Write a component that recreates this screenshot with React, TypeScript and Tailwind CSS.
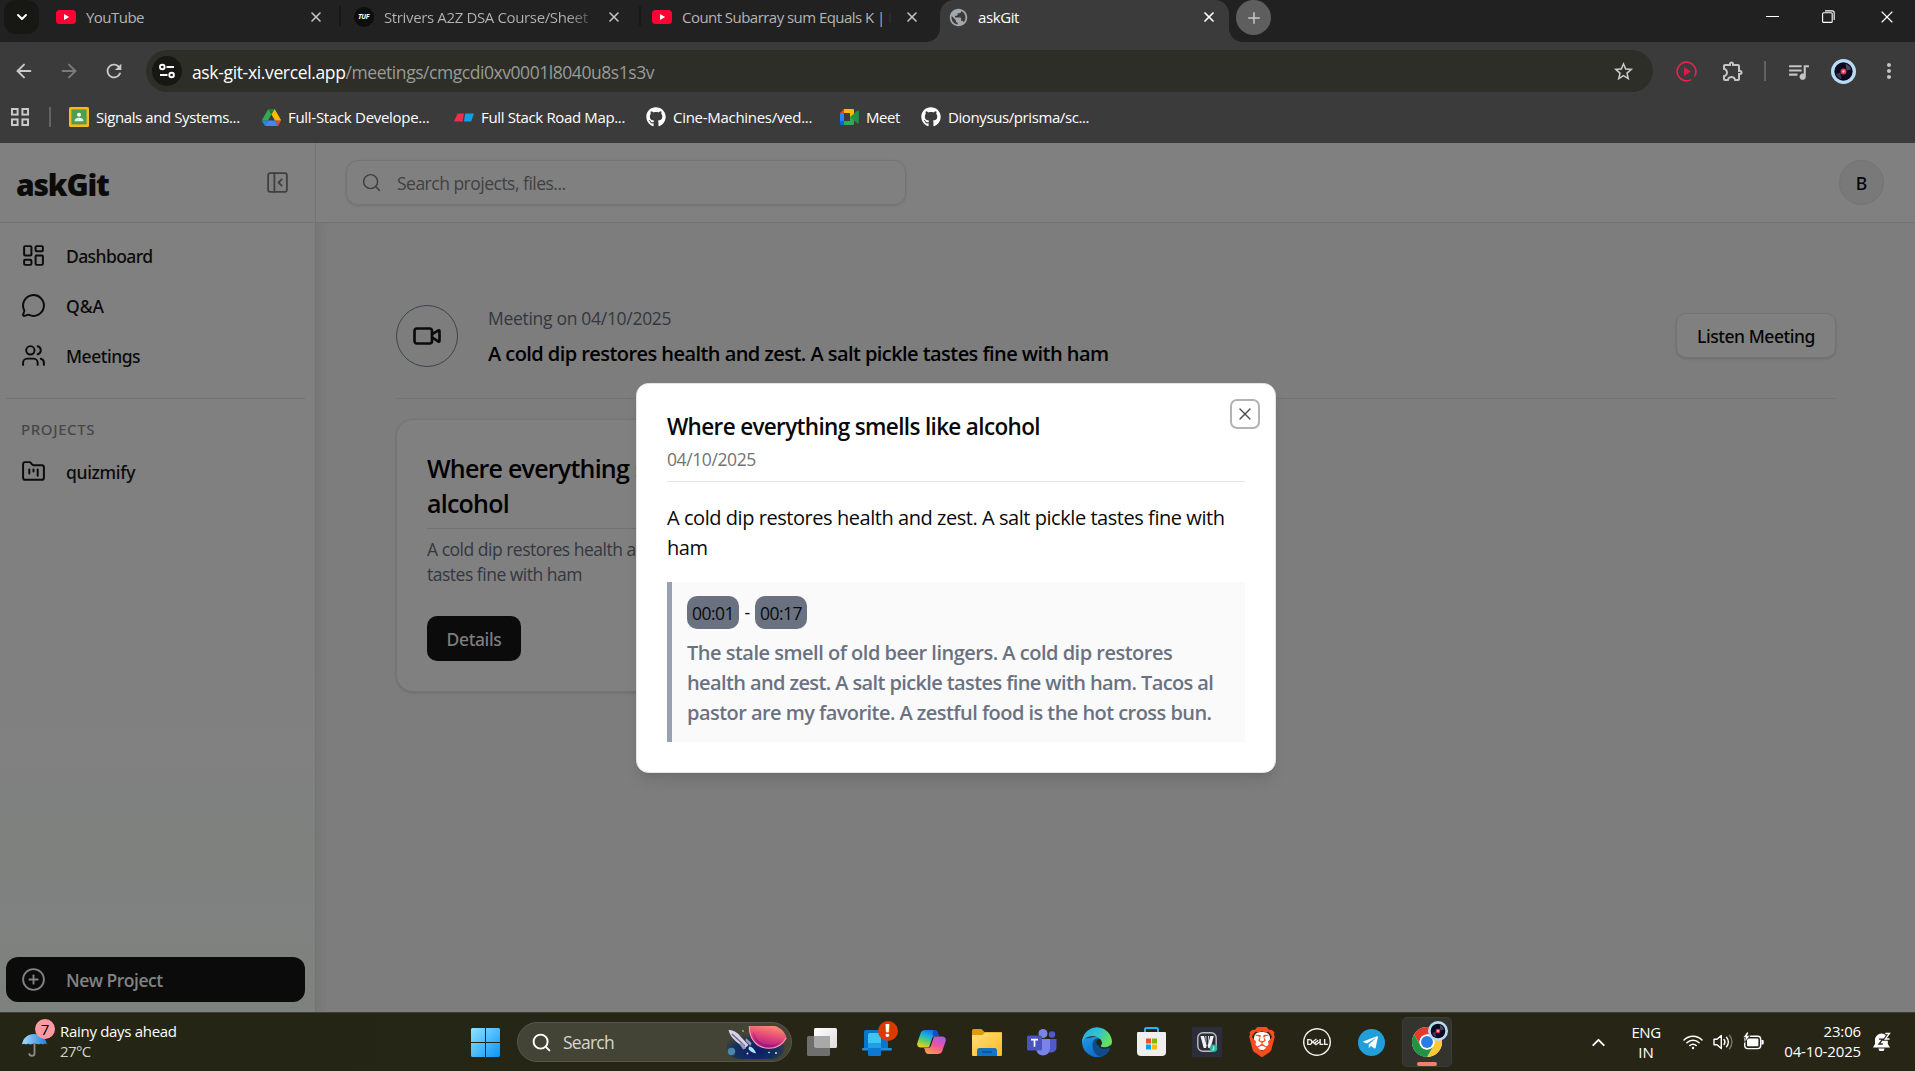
import type { ReactNode } from "react";
import {
  ArrowLeft, ArrowRight, ChevronDown, ChevronUp, CirclePlus, FolderKanban, LayoutDashboard,
  MessageCircle, PanelLeftClose, Plus, Search, Users, Video, X,
} from "lucide-react";
import { FaGithub, FaTelegramPlane } from "react-icons/fa";
import { MdMoreVert, MdOutlineExtension, MdPublic, MdQueueMusic, MdRefresh, MdStarBorder } from "react-icons/md";
import { SiBrave, SiDell } from "react-icons/si";

/* ---------- small drawings ---------- */

function YouTubeIcon() {
  return (
    <svg className="h-[14px] w-5 shrink-0" viewBox="0 0 20 14">
      <rect width="20" height="14" rx="3.5" fill="#ff0033" />
      <path d="M8 4l5.2 3L8 10z" fill="#fff" />
    </svg>
  );
}

function DiscIcon({ className }: { className: string }) {
  return (
    <svg className={className} viewBox="0 0 24 24">
      <circle cx="12" cy="12" r="12" fill="#b9dcf5" />
      <circle cx="12" cy="12" r="8.8" fill="#0b0a20" />
      <path d="M14 4.5a8 8 0 015.2 5.6L15 11z" fill="#4a4a60" />
      <path d="M10 19.5a8 8 0 01-5-5L9 13z" fill="#3b3b52" />
      <circle cx="12" cy="12" r="2.8" fill="#e8365f" />
      <circle cx="12" cy="12" r="1.1" fill="#ffd9a0" />
    </svg>
  );
}

function TuneIcon() {
  return (
    <svg className="size-[18px]" viewBox="0 0 18 18" fill="none" stroke="#fff" strokeWidth="1.9">
      <circle cx="4.3" cy="5" r="2.3" />
      <path d="M8.5 5H16M2 13h7.5" />
      <circle cx="13.6" cy="13" r="2.3" />
    </svg>
  );
}

function ClassroomIcon() {
  return (
    <svg className="size-5" viewBox="0 0 20 20">
      <rect width="20" height="20" rx="1.5" fill="#f6bb16" />
      <rect x="2.4" y="2.4" width="15.2" height="15" fill="#4a9f52" />
      <circle cx="10" cy="7.7" r="2" fill="#fff" />
      <path d="M5.5 14.2c0-2.4 2.2-3.4 4.5-3.4s4.5 1 4.5 3.4z" fill="#e8f5ec" />
    </svg>
  );
}

function DriveIcon() {
  return (
    <svg className="h-[17px] w-[19px]" viewBox="0 0 87.3 78">
      <path d="M6.6 66.85l3.85 6.65c.8 1.4 1.95 2.5 3.3 3.3L27.5 53H0c0 1.55.4 3.1 1.2 4.5z" fill="#1e88e5" />
      <path d="M43.65 25L29.9 1.2c-1.35.8-2.5 1.9-3.3 3.3L1.2 48.5C.4 49.9 0 51.45 0 53h27.5z" fill="#34a853" />
      <path d="M73.55 76.8c1.35-.8 2.5-1.9 3.3-3.3l8.5-16c.8-1.4 1.2-2.95 1.2-4.5H59.8l5.85 11.5z" fill="#ea4335" />
      <path d="M43.65 25L57.4 1.2C56.05.4 54.5 0 52.9 0H34.4c-1.6 0-3.15.45-4.5 1.2z" fill="#188038" />
      <path d="M59.8 53H27.5L13.75 76.8c1.35.8 2.9 1.2 4.5 1.2h50.8c1.6 0 3.15-.45 4.5-1.2z" fill="#4285f4" />
      <path d="M73.4 26.5L60.7 4.5c-.8-1.4-1.95-2.5-3.3-3.3L43.65 25 59.8 53h27.45c0-1.55-.4-3.1-1.2-4.5z" fill="#fbbc04" />
    </svg>
  );
}

function RoadmapIcon() {
  return (
    <svg className="h-[9px] w-5" viewBox="0 0 20 8">
      <path d="M3.5 0H10L8.6 8H0z" fill="#ee2e4a" />
      <path d="M11.2 0H20l-2.8 8H10z" fill="#12a0e0" />
    </svg>
  );
}

function MeetIcon() {
  return (
    <svg className="h-4 w-[19px]" viewBox="0 0 19 16">
      <path d="M4 0v4H0z" fill="#ea4335" />
      <path d="M0 4h4v8H0z" fill="#2684fc" />
      <path d="M0 12h4v4H1.2A1.2 1.2 0 010 14.8z" fill="#0066da" />
      <path d="M4 0h8.8A1.2 1.2 0 0114 1.2V8l-4 0V4H4z" fill="#ffba00" />
      <path d="M4 12h6V8h4v6.8a1.2 1.2 0 01-1.2 1.2H4z" fill="#34a853" />
      <path d="M10 8l7.6-6.4c.5-.4 1.2-.1 1.2.6v11.6c0 .6-.7 1-1.2.6z" fill="#229148" />
    </svg>
  );
}

function AppsIcon() {
  return (
    <svg className="size-[18px]" viewBox="0 0 18 18" fill="none" stroke="#c9c9c9" strokeWidth="2">
      <rect x="1" y="1" width="5.6" height="5.6" />
      <rect x="11.4" y="1" width="5.6" height="5.6" />
      <rect x="1" y="11.4" width="5.6" height="5.6" />
      <rect x="11.4" y="11.4" width="5.6" height="5.6" />
    </svg>
  );
}

function RestoreIcon() {
  return (
    <svg className="size-[13px]" viewBox="0 0 13 13" fill="none" stroke="#fff" strokeWidth="1.1">
      <rect x="0.6" y="2.8" width="9.6" height="9.6" rx="1" />
      <path d="M3 .9h7.2a2 2 0 012 2V10" />
    </svg>
  );
}

function RecordIcon() {
  return (
    <svg className="size-[21px]" viewBox="0 0 21 21">
      <circle
        cx="10.5" cy="10.5" r="9.400" fill="none" stroke="#e8234f" strokeWidth="1.600"
        strokeDasharray="54 5" transform="rotate(60 10.5 10.5)"
      />
      <path d="M8 6l7 4.500L8 15z" fill="#d81b47" />
    </svg>
  );
}

function UmbrellaIcon() {
  return (
    <svg className="h-6 w-[25px]" viewBox="0 0 25 24">
      <defs>
        <linearGradient id="umb" x1="0" x2="1">
          <stop offset="0" stopColor="#a8dcfb" />
          <stop offset="1" stopColor="#1e7fe0" />
        </linearGradient>
      </defs>
      <path d="M12.5 11v9.2a2.6 2.6 0 01-5.2 0" fill="none" stroke="#8d8d8d" strokeWidth="1.8" />
      <path d="M0 11.5C1 5 6 1 12.3 1S24 5 25 11.5c-1.3-.9-2.800-.9-4 0-1.4-.9-3-.9-4.300 0-1.400-.9-7-.9-8.400 0-1.300-.9-3-.9-4.300 0-1.200-.9-2.700-.9-4 0z" fill="url(#umb)" />
    </svg>
  );
}

function WindowsIcon() {
  return (
    <svg className="size-[29px]" viewBox="0 0 29 29">
      <defs>
        <linearGradient id="win" x1="0" y1="0" x2="1" y2="1" gradientUnits="objectBoundingBox">
          <stop offset="0" stopColor="#8fe3ff" />
          <stop offset="1" stopColor="#0a94f5" />
        </linearGradient>
      </defs>
      <path d="M1 0h13v14H0V1zM15 0h13l1 1v13H15zM0 15h14v14H1l-1-1zM15 15h14v13l-1 1H15z" fill="url(#win)" />
    </svg>
  );
}

function RocketPicture() {
  return (
    <svg className="h-[34px] w-[60px]" viewBox="0 0 60 34">
      <defs>
        <radialGradient id="sky" cx="0.5" cy="0.7" r="0.6">
          <stop offset="0" stopColor="#0e1a6a" />
          <stop offset="0.6" stopColor="#12305f" />
          <stop offset="1" stopColor="#12305f" stopOpacity="0" />
        </radialGradient>
        <linearGradient id="planet" x1="0.7" y1="0" x2="0.35" y2="1">
          <stop offset="0" stopColor="#ff8f6b" />
          <stop offset="0.5" stopColor="#e0457a" />
          <stop offset="1" stopColor="#a3128a" />
        </linearGradient>
      </defs>
      <rect x="0" y="6" width="57" height="28" rx="12" fill="url(#sky)" />
      <path d="M22 1h26c6 2 10 6 11.500 12-3 6-9 10.500-17 10.500C30 23.500 21.500 14 22 1z" fill="url(#planet)" />
      <path d="M26 6c2 8 8 14 16 14 5 0 9-1 12-4-3 4.500-7 6-12 6-9 0-16-7-16-16z" fill="#8e0f78" opacity="0.550" />
      <path d="M22.300 1c-.4 13 8 22.300 19.500 22.300 8 0 14-4 17.400-10.300" fill="none" stroke="#ff9bb0" strokeWidth="1.100" />
      <path d="M1.500 5c5 0 9 2.500 12 6.500l8 8.500-4 3.500-9-7.500C5 13 2.500 9 1.500 5z" fill="#d9d3e6" />
      <path d="M5 9l13 12" stroke="#6d6688" strokeWidth="1.400" />
      <path d="M12 18l4 6.500 3-1-3-5zM19 13l5.500 5-1 3-5-5z" fill="#9d94b8" />
      <path d="M22 21.500c4 .5 6 3.500 7 7-4-1-6-2.500-7.500-4.500z" fill="#a9e4ff" />
      <circle cx="4.500" cy="26.500" r="3.700" fill="#4c86a8" />
      <circle cx="16" cy="6" r="0.800" fill="#ffd9b0" />
      <circle cx="20.500" cy="28.500" r="0.900" fill="#ffd9b0" />
      <circle cx="42" cy="27.500" r="0.800" fill="#fff" />
      <circle cx="49" cy="28" r="1" fill="#ffd9b0" />
    </svg>
  );
}

function TaskViewIcon() {
  return (
    <svg className="h-7 w-[30px]" viewBox="0 0 30 28">
      <defs>
        <linearGradient id="tv" x1="0" y1="0" x2="1" y2="1">
          <stop offset="0" stopColor="#fff" />
          <stop offset="1" stopColor="#dcdcdc" />
        </linearGradient>
      </defs>
      <rect x="7" y="0" width="23" height="20" rx="1.5" fill="url(#tv)" />
      <rect x="0" y="8" width="23" height="20" rx="1.5" fill="#6f6f6f" />
      <path d="M7 8h16v12H8.500L7 18.500z" fill="#a9a9a9" />
    </svg>
  );
}

function PhoneLinkIcon() {
  return (
    <svg className="h-[27px] w-[30px]" viewBox="0 0 30 27">
      <rect x="2" y="1" width="24" height="20" rx="1.5" fill="#0a74c9" />
      <rect x="0" y="19" width="30" height="2.600" rx="1" fill="#1690e0" />
      <rect x="6" y="4" width="13" height="23" rx="1.500" fill="#0f78d0" />
      <path d="M6 5.500A1.500 1.500 0 017.500 4h10A1.500 1.500 0 0119 5.500V18H6z" fill="#3cc6f4" />
      <path d="M6 14h13v5H6z" fill="#1e9fe4" />
    </svg>
  );
}

function CopilotIcon() {
  return (
    <svg className="h-[26px] w-[29px]" viewBox="0 0 29 26">
      <defs>
        <linearGradient id="cpA" x1="0.6" y1="0" x2="0.2" y2="1">
          <stop offset="0" stopColor="#1b6fe8" />
          <stop offset="0.35" stopColor="#18b5d8" />
          <stop offset="0.7" stopColor="#7fd04a" />
          <stop offset="1" stopColor="#ffcf1a" />
        </linearGradient>
        <linearGradient id="cpB" x1="0.8" y1="0" x2="0.3" y2="1">
          <stop offset="0" stopColor="#a05cf0" />
          <stop offset="0.5" stopColor="#f0539c" />
          <stop offset="1" stopColor="#ff9a4a" />
        </linearGradient>
      </defs>
      <path d="M8.500 1h9.200c1.600 0 2.600 1 3 2.400L21.800 7h-3.700c-1.600 0-2.500.9-3 2.300L12 18.500H4C.8 18.500-.4 16.500.3 14L3.600 4.300C4.400 2 6 1 8.500 1z" fill="url(#cpA)" />
      <path d="M16.500 1h1.200c1.600 0 2.600 1 3 2.400L21.800 7h-4.300c-1 0-1.800-.8-2-1.800z" fill="#1849c6" />
      <path d="M20.500 25h-9.200c-1.600 0-2.600-1-3-2.400L7.200 19h3.700c1.600 0 2.500-.9 3-2.300L17 7.500h8c3.200 0 4.400 2 3.700 4.500l-3.300 9.700c-.8 2.300-2.400 3.300-4.900 3.300z" fill="url(#cpB)" />
    </svg>
  );
}

function ExplorerIcon() {
  return (
    <svg className="h-[27px] w-[30px]" viewBox="0 0 30 27">
      <defs>
        <linearGradient id="fold" x1="0" y1="0" x2="1" y2="1">
          <stop offset="0" stopColor="#ffe07a" />
          <stop offset="1" stopColor="#fbb924" />
        </linearGradient>
      </defs>
      <path d="M0 1.500A1.500 1.500 0 011.500 0h8l3 3H29a1 1 0 011 1v8H0z" fill="#dd9a0b" />
      <path d="M0 6h10.500l2.500-2.500h17V26a1 1 0 01-1 1H1a1 1 0 01-1-1z" fill="url(#fold)" />
      <path d="M5 27v-5.500A2.500 2.500 0 017.500 19h15a2.500 2.500 0 012.500 2.500V27z" fill="#1173c4" />
      <path d="M10 23h10" stroke="#0a4f91" strokeWidth="1.500" />
    </svg>
  );
}

function TeamsIcon() {
  return (
    <svg className="h-[27px] w-[30px]" viewBox="0 0 30 27">
      <circle cx="25" cy="5.500" r="3.200" fill="#5059c9" />
      <circle cx="16" cy="4.500" r="4.500" fill="#7b83eb" />
      <path d="M20 10h9.500v8.500a5 5 0 01-5 5H20z" fill="#5059c9" />
      <path d="M9 10h14v9.500a7 7 0 01-14 0z" fill="#7b83eb" />
      <rect x="0" y="6.500" width="15" height="15" rx="1.500" fill="#4b53bc" />
      <path d="M4 10.700h7M7.500 10.700v7" stroke="#fff" strokeWidth="1.700" />
    </svg>
  );
}

function EdgeIcon() {
  return (
    <svg className="size-[30px]" viewBox="0 0 30 30">
      <defs>
        <linearGradient id="edA" x1="0" y1="0" x2="1" y2="0.4">
          <stop offset="0" stopColor="#2aa7e8" />
          <stop offset="0.55" stopColor="#2fc3d2" />
          <stop offset="1" stopColor="#66df5c" />
        </linearGradient>
        <linearGradient id="edB" x1="0" y1="0" x2="0.6" y2="1">
          <stop offset="0" stopColor="#1f9de8" />
          <stop offset="1" stopColor="#0f67c4" />
        </linearGradient>
      </defs>
      <path d="M.4 12A15 15 0 000 15a15 15 0 0027.600 8.300L20 18 17 9z" fill="url(#edB)" />
      <path d="M.4 12A15 15 0 0130 14.500c0 4-3 6.500-7 6.500-3 0-5-1-5-2.300 0-.9 1.300-1.400 1.300-3.400 0-3.500-3.500-6-8-6C6.500 9.300 2 11 .4 15z" fill="url(#edA)" />
      <path d="M10.500 18c0-5 3-7 6-6.700 1.800.7 2.800 2.200 2.800 4 0 2-1.300 2.500-1.300 3.400 0 1.300 2 2.300 5 2.300 1.800 0 3.400-.4 4.600-1.200.5.8.4 2-.3 3.500a15 15 0 01-9 6.200C13.500 28.500 10.500 23.500 10.500 18z" fill="#114a8b" />
      <path d="M19.300 15.300c0 2-1.300 2.500-1.300 3.400 0 1.300 2 2.300 5 2.300 2.500 0 4.500-.8 5.700-2.200" fill="none" stroke="#252516" strokeWidth="1.600" />
      <ellipse cx="17" cy="15.500" rx="2.600" ry="3.200" fill="#252516" />
    </svg>
  );
}

function StoreIcon() {
  return (
    <svg className="h-[30px] w-[29px]" viewBox="0 0 29 30">
      <path d="M8 6V2.500A1.500 1.500 0 019.500 1h10A1.500 1.500 0 0121 2.500V6" fill="none" stroke="#2bb3f0" strokeWidth="2" />
      <path d="M0 6a1 1 0 011-1h27a1 1 0 011 1v19a4 4 0 01-4 4H4a4 4 0 01-4-4z" fill="#efefef" />
      <path d="M9 11.500h5v5H9z" fill="#f25022" />
      <path d="M15 11.500h5v5h-5z" fill="#7fba00" />
      <path d="M9 17.500h5v5H9z" fill="#00a4ef" />
      <path d="M15 17.500h5v5h-5z" fill="#ffb900" />
    </svg>
  );
}

function SavedAppIcon() {
  return (
    <svg className="size-[30px]" viewBox="0 0 30 30">
      <rect width="30" height="30" fill="#2b2d3b" />
      <rect x="5.800" y="5.800" width="18.400" height="18.400" rx="5" fill="none" stroke="#bdbdbd" strokeWidth="1.400" />
      <path d="M8.500 9h3.500l2.600 9.500-.6 2.500h-2.300z" fill="#f2f2f2" />
      <path d="M13.300 9h1v8.500zM17 9h-1v8.500z" fill="#f2f2f2" />
      <path d="M21.800 9h-3.500l-2.600 9.500.6 2.500h2.300z" fill="#f2f2f2" />
      <circle cx="21.500" cy="21.300" r="3.800" fill="#25b8a0" />
      <path d="M21.800 19.300v3.200M20.200 22.800h1.600" stroke="#fff" strokeWidth="0.900" />
    </svg>
  );
}

function ChromeIcon() {
  return (
    <svg className="size-[30px]" viewBox="0 0 48 48">
      <circle cx="24" cy="24" r="24" fill="#fff" />
      <path d="M3.200 12A24 24 0 0144.800 12H24a12 12 0 00-10.400 18z" fill="#e33b2e" />
      <path d="M44.800 12A24 24 0 0124 48l10.400-18A12 12 0 0024 12z" fill="#fcc934" />
      <path d="M24 48A24 24 0 013.200 12l10.400 18a12 12 0 0020.800 0z" fill="#229342" />
      <circle cx="24" cy="24" r="12" fill="#fff" />
      <circle cx="24" cy="24" r="9.500" fill="#2a7de9" />
    </svg>
  );
}

function WifiIcon() {
  return (
    <svg className="h-4 w-5" viewBox="0 0 20 16" fill="none" stroke="#fff" strokeWidth="1.500" strokeLinecap="round">
      <path d="M1 6a12.500 12.500 0 0118 0M3.900 8.800a8.500 8.500 0 0112.200 0M6.800 11.500a4.500 4.500 0 016.400 0" />
      <circle cx="10" cy="14" r="1.200" fill="#fff" stroke="none" />
    </svg>
  );
}

function SpeakerIcon() {
  return (
    <svg className="h-[18px] w-[21px]" viewBox="0 0 21 18" fill="none" stroke="#fff" strokeWidth="1.400" strokeLinecap="round" strokeLinejoin="round">
      <path d="M1 6.300h3L8.300 2.500v13L4 11.700H1z" />
      <path d="M11 6.500a4 4 0 010 5M13.500 4.200a7.200 7.200 0 010 9.600" />
      <path d="M16.500 2.300a10.500 10.500 0 010 13.400" stroke="#77776c" />
    </svg>
  );
}

function BatteryIcon() {
  return (
    <svg className="h-[18px] w-[21px]" viewBox="0 0 21 18">
      <rect x="1.700" y="4.200" width="16" height="12.400" rx="3" fill="none" stroke="#fff" strokeWidth="1.400" />
      <rect x="4" y="6.500" width="11.400" height="7.800" rx="1" fill="#fff" />
      <path d="M18.500 8h1c.8 0 1.200.4 1.200 1v2.600c0 .6-.4 1-1.200 1h-1z" fill="#fff" />
      <path d="M3.800 0L0 5.600h2.400L1.500 10.500 7.200 3.800H4.600L5.800 0z" fill="#fff" stroke="#252516" strokeWidth="0.800" />
    </svg>
  );
}

function BellIcon() {
  return (
    <svg className="h-[19px] w-[18px]" viewBox="0 0 18 19">
      <path d="M8.500 1.500A6.500 6.500 0 002 8v4L0 15.400h17L14.800 12V8a6.300 6.300 0 00-6.300-6.500z" fill="#fff" />
      <path d="M5.500 16.400h6a3 3 0 01-6 0z" fill="#fff" />
      <path d="M6 7.200h3.600L6 12h3.800" fill="none" stroke="#252516" strokeWidth="1.300" />
      <path d="M12.300 1.500h4.200L12.300 7h4.200" fill="none" stroke="#252516" strokeWidth="3.400" />
      <path d="M12.300 1.500h4.200L12.300 7h4.200" fill="none" stroke="#fff" strokeWidth="1.300" />
    </svg>
  );
}

/* ---------- browser chrome ---------- */

function Tab({ icon, title, width }: { icon: ReactNode; title: ReactNode; width: string }) {
  return (
    <div className={`flex h-[34px] shrink-0 items-center ${width}`}>
      <div className="flex w-5 shrink-0 justify-center">{icon}</div>
      <div className="ml-[10px] h-5 w-[204px] whitespace-nowrap text-[15px] leading-5 text-[#b4b4b4]">
        {title}
      </div>
      <X className="ml-[18px] size-[16px] shrink-0 text-[#c4c4c4]" strokeWidth={2.4} />
    </div>
  );
}

function TabSeparator() {
  return <div className="mt-1.5 h-5 w-[2px] shrink-0 bg-[#181914]" />;
}

function TabStrip() {
  return (
    <div className="flex h-[42px] bg-[#212121]">
      <div className="ml-1 flex h-[34px] w-[35px] items-center justify-center rounded-xl bg-[#171813]">
        <ChevronDown className="size-4 text-white" strokeWidth={3} />
      </div>
      <Tab
        width="ml-[17px] w-[283px]"
        icon={<YouTubeIcon />}
        title={<span className="tracking-[-0.035em]">YouTube</span>}
      />
      <TabSeparator />
      <Tab
        width="ml-[13px] w-[285px]"
        icon={
          <span className="flex size-5 shrink-0 items-center justify-center rounded-full bg-[#0d0d0d] pr-px text-[7px] font-bold italic tracking-tighter text-white">
            TUF
          </span>
        }
        title={
          <span className="bg-gradient-to-r from-[#b4b4b4] from-90% to-[#555] bg-clip-text tracking-[-0.024em] text-transparent">
            Strivers A2Z DSA Course/Sheet
          </span>
        }
      />
      <TabSeparator />
      <Tab
        width="ml-[11px] w-[273px]"
        icon={<YouTubeIcon />}
        title={<span className="tracking-[-0.036em]">Count Subarray sum Equals K | <span className="text-[#303030]">I</span></span>}
      />
      <div className="-ml-px h-[42px] w-4 bg-[#3b3b3b]">
        <div className="h-full w-full rounded-br-[14px] bg-[#212121]" />
      </div>
      <div className="flex h-[42px] w-[289px] shrink-0 items-start rounded-t-[14px] bg-[#3b3b3b]">
        <div className="flex h-[34px] w-full items-center pl-2 pr-[12px]">
          <MdPublic className="size-[21px] text-[#a3a8ad]" />
          <span className="ml-[9px] text-[15px] leading-5 tracking-[-0.027em] text-white">askGit</span>
          <X className="ml-auto size-4 text-white" strokeWidth={2.6} />
        </div>
      </div>
      <div className="h-[42px] w-[15px] bg-[#3b3b3b]">
        <div className="h-full w-full rounded-bl-[14px] bg-[#212121]" />
      </div>
      <div className="-ml-[8px] flex size-[35px] items-center justify-center rounded-full bg-[#5e5e5e]">
        <Plus className="size-[18px] text-[#c8c8c8]" strokeWidth={2} />
      </div>
      <div className="ml-auto flex h-[33px] items-center pr-[18px]">
        <div className="h-px w-[13px] bg-white" />
        <div className="ml-[43px]"><RestoreIcon /></div>
        <X className="ml-[42px] size-[20px] text-white" strokeWidth={1.4} />
      </div>
    </div>
  );
}

function AddressBar() {
  return (
    <div className="flex h-[58px] items-center">
      <div className="flex w-[146px] items-center gap-[23px] pl-[13px]">
        <ArrowLeft className="size-[22px] text-[#c9c9c9]" strokeWidth={2.1} />
        <ArrowRight className="size-[22px] text-[#7b7b7b]" strokeWidth={2.1} />
        <MdRefresh className="size-[22px] text-[#c9c9c9]" />
      </div>
      <div className="flex h-[42px] w-[1507px] items-center rounded-full bg-[#2d2e28] pl-[6px] pr-[18px]">
        <div className="flex size-[30px] items-center justify-center rounded-full bg-[#171813]">
          <TuneIcon />
        </div>
        <div className="ml-[10px] whitespace-nowrap pt-px text-[17.5px] leading-6 tracking-[-0.0255em] text-[#9a9b97]">
          <span className="tracking-[-0.02em] text-white">ask-git-xi.vercel.app</span>
          /meetings/cmgcdi0xv0001l8040u8s1s3v
        </div>
        <MdStarBorder className="ml-auto size-[23px] text-[#c9c9c9]" />
      </div>
      <div className="flex flex-1 items-center pl-[23px]">
        <RecordIcon />
        <MdOutlineExtension className="ml-[24px] size-[24px] text-[#c4c4c4]" />
        <div className="ml-[19px] h-5 w-[2px] bg-[#626262]" />
        <MdQueueMusic className="ml-[20px] size-[25px] text-[#c4c4c4]" />
        <DiscIcon className="ml-5 size-[25px]" />
        <MdMoreVert className="ml-[21px] size-[24px] text-[#c4c4c4]" />
      </div>
    </div>
  );
}

function Bookmark({ icon, label, className }: { icon: ReactNode; label: string; className: string }) {
  return (
    <div className={`flex items-center ${className}`}>
      <div className="flex w-5 justify-center">{icon}</div>
      <span className="ml-[7px] whitespace-nowrap text-[15px] leading-5 text-white">{label}</span>
    </div>
  );
}

function BookmarksBar() {
  return (
    <div className="flex h-[34px] items-center pl-[11px]">
      <AppsIcon />
      <div className="ml-[20px] h-5 w-[2px] bg-[#626262]" />
      <Bookmark className="ml-[18px] w-[192px] tracking-[-0.0255em]" icon={<ClassroomIcon />} label="Signals and Systems..." />
      <Bookmark className="w-[193px] tracking-[-0.018em]" icon={<DriveIcon />} label="Full-Stack Develope..." />
      <Bookmark className="w-[192px] tracking-[-0.022em]" icon={<RoadmapIcon />} label="Full Stack Road Map..." />
      <Bookmark className="w-[193px] tracking-[-0.018em]" icon={<FaGithub className="size-5 text-white" />} label="Cine-Machines/ved..." />
      <Bookmark className="w-[82px] tracking-[-0.028em]" icon={<MeetIcon />} label="Meet" />
      <Bookmark className="tracking-[-0.025em]" icon={<FaGithub className="size-5 text-white" />} label="Dionysus/prisma/sc..." />
    </div>
  );
}

/* ---------- askGit page ---------- */

function NavItem({ icon, label, className = "" }: { icon: ReactNode; label: string; className?: string }) {
  return (
    <div className={`flex h-[50px] items-center pl-[21px] text-[#0b0b0b] ${className}`}>
      {icon}
      <span className="ml-5 pt-[2px] font-['Noto_Sans'] text-[17.5px] font-medium leading-6">{label}</span>
    </div>
  );
}

function Sidebar() {
  return (
    <aside className="flex w-[316px] shrink-0 flex-col border-r border-[#737373] bg-gradient-to-b from-[#808080] from-60% to-[#7e827f]">
      <div className="flex h-20 items-center justify-between border-b border-[#737373] pl-4 pr-[25px]">
        <span className="pt-[3px] text-[30px] font-extrabold tracking-[-0.04em] text-[#0b0b0b]">askGit</span>
        <PanelLeftClose className="size-[25px] text-[#3f3f3f]" strokeWidth={1.7} />
      </div>
      <nav className="pt-[7px]">
        <NavItem className="tracking-[-0.037em]" icon={<LayoutDashboard className="size-[25px]" strokeWidth={1.9} />} label="Dashboard" />
        <NavItem icon={<MessageCircle className="size-[25px]" strokeWidth={1.9} />} label="Q&A" />
        <NavItem className="tracking-[-0.03em]" icon={<Users className="size-[25px]" strokeWidth={1.9} />} label="Meetings" />
      </nav>
      <div className="ml-1.5 mr-[10px] mt-[18px] h-px bg-[#737373]" />
      <div className="mt-5 pl-[21px] font-['Noto_Sans'] text-[15px] font-medium leading-5 tracking-[0.04em] text-[#474747]">
        PROJECTS
      </div>
      <NavItem className="mt-[7px] tracking-[-0.02em]" icon={<FolderKanban className="size-[25px]" strokeWidth={1.9} />} label="quizmify" />
      <button className="mb-[10px] ml-1.5 mr-[10px] mt-auto flex h-[45px] items-center rounded-xl bg-[#0b0b0b] pl-[15px] text-[#828282]">
        <CirclePlus className="size-[25px]" strokeWidth={1.8} />
        <span className="ml-5 pt-[2px] text-[17.5px] font-semibold tracking-[-0.029em]">New Project</span>
      </button>
    </aside>
  );
}

function TopBar() {
  return (
    <header className="flex h-20 items-center justify-between border-b border-[#737373] bg-[#808080] pl-[30px] pr-[31px]">
      <div className="flex h-[45px] w-[560px] items-center rounded-xl border border-[#747474] pl-[14px] shadow-sm">
        <Search className="size-[21px] text-[#404040]" strokeWidth={1.7} />
        <span className="ml-[15px] pt-[2px] text-[17.5px] tracking-[-0.029em] text-[#404040]">Search projects, files...</span>
      </div>
      <div className="flex size-[45px] items-center justify-center rounded-full border border-[#747474] bg-[#797979] pt-[2px] font-['Noto_Sans'] text-[17.5px] font-medium text-[#050505]">
        B
      </div>
    </header>
  );
}

function MeetingHeader() {
  return (
    <div className="flex h-[94px] items-start border-b border-[#737373]">
      <div className="flex size-[62px] items-center justify-center rounded-full border border-[#3d424c]">
        <Video className="size-[30px] text-[#0b0b0b]" strokeWidth={2.1} />
      </div>
      <div className="ml-[30px]">
        <div className="mt-px text-[17.5px] leading-[25px] tracking-[-0.017em] text-[#33373f]">Meeting on 04/10/2025</div>
        <div className="mt-[10px] text-[20px] font-semibold leading-[25px] tracking-[-0.028em] text-black">
          A cold dip restores health and zest. A salt pickle tastes fine with ham
        </div>
      </div>
      <button className="ml-auto mt-2 flex h-[45px] w-40 items-center justify-center rounded-[10px] border border-[#737373] bg-[#808080] pt-[2px] font-['Noto_Sans'] text-[17.5px] font-medium tracking-[-0.026em] text-[#050505] shadow-sm">
        Listen Meeting
      </button>
    </div>
  );
}

function SummaryCard() {
  return (
    <section className="mt-5 flex h-[273px] w-[464px] flex-col items-start rounded-[17px] border border-[#747474] bg-[#808080] px-[30px] pt-[31px] shadow-sm">
      <h2 className="w-[380px] text-[25px] font-semibold leading-[35px] tracking-[-0.031em] text-black">
        Where everything smells like alcohol
      </h2>
      <div className="mt-[7px] h-px w-full bg-[#737373]" />
      <p className="mt-2 w-[400px] text-[17.5px] leading-[25px] tracking-[-0.028em] text-[#33373f]">
        A cold dip restores health and zest. A salt pickle tastes fine with ham
      </p>
      <button className="mt-[29px] flex h-[45px] w-[94px] items-center justify-center rounded-[10px] bg-[#0b0b0b] pt-[2px] font-['Noto_Sans'] text-[17.5px] font-medium tracking-[-0.021em] text-[#7d7d7d]">
        Details
      </button>
    </section>
  );
}

function TimeBadge({ children }: { children: string }) {
  return (
    <span className="flex h-[33px] w-[52px] items-center justify-center rounded-[10px] bg-[#6a7282] pt-px">{children}</span>
  );
}

function SummaryDialog() {
  return (
    <div className="absolute left-[636px] top-[383px] h-[390px] w-[640px] rounded-[12.5px] border border-[#e5e5e5] bg-white px-[30px] pt-[30px] shadow-lg">
      <div className="absolute right-[15px] top-[15px] flex size-[30px] items-center justify-center rounded-[7px] border-[2.5px] border-[#b3b3b3] bg-white">
        <X className="size-5 text-[#4a4a4a]" strokeWidth={1.6} />
      </div>
      <h1 className="text-[22.5px] font-semibold leading-[25px] tracking-[-0.029em] text-[#0a0a0a]">
        Where everything smells like alcohol
      </h1>
      <div className="mt-[8px] text-[17.5px] leading-[25px] tracking-[-0.023em] text-[#737373]">04/10/2025</div>
      <div className="mt-[9px] h-px bg-[#e5e5e5]" />
      <p className="mt-[21px] text-[20px] leading-[30px] tracking-[-0.0225em] text-[#0a0a0a]">
        A cold dip restores health and zest. A salt pickle tastes fine with ham
      </p>
      <blockquote className="mt-[19px] h-[160px] border-l-[5px] border-[#99a1af] bg-[#fafafa] pl-[15px] pt-[14px]">
        <div className="flex items-center text-[17.5px] leading-[33px] tracking-[-0.03em] text-[#0a0a0a]">
          <TimeBadge>00:01</TimeBadge>
          <span className="w-4 text-center">-</span>
          <TimeBadge>00:17</TimeBadge>
        </div>
        <p className="mt-[9px] whitespace-nowrap text-[20px] font-semibold leading-[30px] text-[#6a7282]">
          <span className="tracking-[-0.025em]">The stale smell of old beer lingers. A cold dip restores</span>
          <br />
          <span className="tracking-[-0.0305em]">health and zest. A salt pickle tastes fine with ham. Tacos al</span>
          <br />
          <span className="tracking-[-0.0275em]">pastor are my favorite. A zestful food is the hot cross bun.</span>
        </p>
      </blockquote>
    </div>
  );
}

/* ---------- taskbar ---------- */

function TaskIcon({ children }: { children: ReactNode }) {
  return <div className="flex w-[55px] shrink-0 items-center justify-center">{children}</div>;
}

function Taskbar() {
  return (
    <footer className="flex h-[59px] items-center border-t border-[#3f3f31] bg-gradient-to-r from-[#242515] via-[#272616] to-[#272616] text-white">
      <div className="relative ml-[22px] mt-[5px] flex w-[38px] items-center">
        <UmbrellaIcon />
        <span className="absolute -top-[14px] left-[13px] flex size-5 items-center justify-center rounded-full bg-[#ff99a4] text-[15px] leading-5 text-black">
          7
        </span>
      </div>
      <div className="-mt-[2px] w-[411px] text-[15px] leading-5">
        <div className="tracking-[-0.02em]">Rainy days ahead</div>
        <div className="tracking-[-0.04em] text-[#d2d2cc]">27°C</div>
      </div>
      <WindowsIcon />
      <div className="ml-[17px] flex h-10 w-[275px] items-center rounded-full border border-[#56564a] bg-[#434336] pl-[13px]">
        <Search className="size-[21px] text-white" strokeWidth={2.2} />
        <span className="ml-[11px] pt-px text-[17.5px] tracking-[-0.042em] text-[#d6d6d0]">Search</span>
        <div className="ml-auto pr-[4px]"><RocketPicture /></div>
      </div>
      <div className="ml-[2px] flex h-[50px]">
        <TaskIcon><TaskViewIcon /></TaskIcon>
        <TaskIcon>
          <div className="relative">
            <PhoneLinkIcon />
            <span className="absolute -right-[6px] -top-[8px] flex size-5 items-center justify-center rounded-full bg-[#d83b01] text-[17px] font-extrabold leading-5">
              !
            </span>
          </div>
        </TaskIcon>
        <TaskIcon><CopilotIcon /></TaskIcon>
        <TaskIcon><ExplorerIcon /></TaskIcon>
        <TaskIcon><TeamsIcon /></TaskIcon>
        <TaskIcon><EdgeIcon /></TaskIcon>
        <TaskIcon><StoreIcon /></TaskIcon>
        <TaskIcon><SavedAppIcon /></TaskIcon>
        <TaskIcon>
          <div className="relative flex h-[30px] w-[26px] items-center justify-center">
            <span className="absolute left-[5px] top-[5px] h-[18px] w-4 rounded-md bg-white" />
            <SiBrave className="relative size-[30px] shrink-0 text-[#fb4b1f]" />
          </div>
        </TaskIcon>
        <TaskIcon><SiDell className="size-7 text-[#f2f2f2]" /></TaskIcon>
        <TaskIcon>
          <span className="flex size-[27px] items-center justify-center rounded-full bg-[#229ed9]">
            <FaTelegramPlane className="mr-[2px] size-[17px] text-white" />
          </span>
        </TaskIcon>
        <TaskIcon>
          <div className="relative flex size-[50px] items-center justify-center rounded-[5px] border border-[#3d3d38] bg-[#34342e]">
            <ChromeIcon />
            <DiscIcon className="absolute right-[3px] top-[3px] size-5" />
            <span className="absolute bottom-0 left-[14px] h-1 w-5 rounded-full bg-[#f4806a]" />
          </div>
        </TaskIcon>
      </div>
      <div className="ml-auto flex items-center">
        <ChevronUp className="size-[21px]" strokeWidth={2.2} />
        <div className="-mt-px ml-[21px] w-[32px] text-center text-[15px] leading-5">
          <div className="tracking-[-0.03em]">ENG</div>
          <div>IN</div>
        </div>
        <div className="ml-[21px]"><WifiIcon /></div>
        <div className="ml-[10px]"><SpeakerIcon /></div>
        <div className="-mt-[3px] ml-[9px]"><BatteryIcon /></div>
        <div className="-mt-[2px] w-[97px] text-right text-[15px] leading-5 tracking-[-0.01em]">
          <div>23:06</div>
          <div>04-10-2025</div>
        </div>
        <div className="-mt-[2px] ml-[12px] mr-[24px]"><BellIcon /></div>
      </div>
    </footer>
  );
}

export default function App() {
  return (
    <div className="relative flex h-[1071px] w-[1915px] flex-col overflow-hidden font-['Open_Sans','Noto_Sans',sans-serif]">
      <div className="h-[143px] bg-[#3b3b3b]">
        <TabStrip />
        <AddressBar />
        <BookmarksBar />
      </div>
      <div className="flex h-[869px]">
        <Sidebar />
        <div className="flex flex-1 flex-col">
          <TopBar />
          <main className="flex-1 bg-[#7d7d7d] pl-20 pr-[79px] pt-[82px] shadow-[inset_12px_0_12px_-10px_#747474]">
            <MeetingHeader />
            <SummaryCard />
          </main>
        </div>
      </div>
      <Taskbar />
      <SummaryDialog />
    </div>
  );
}
